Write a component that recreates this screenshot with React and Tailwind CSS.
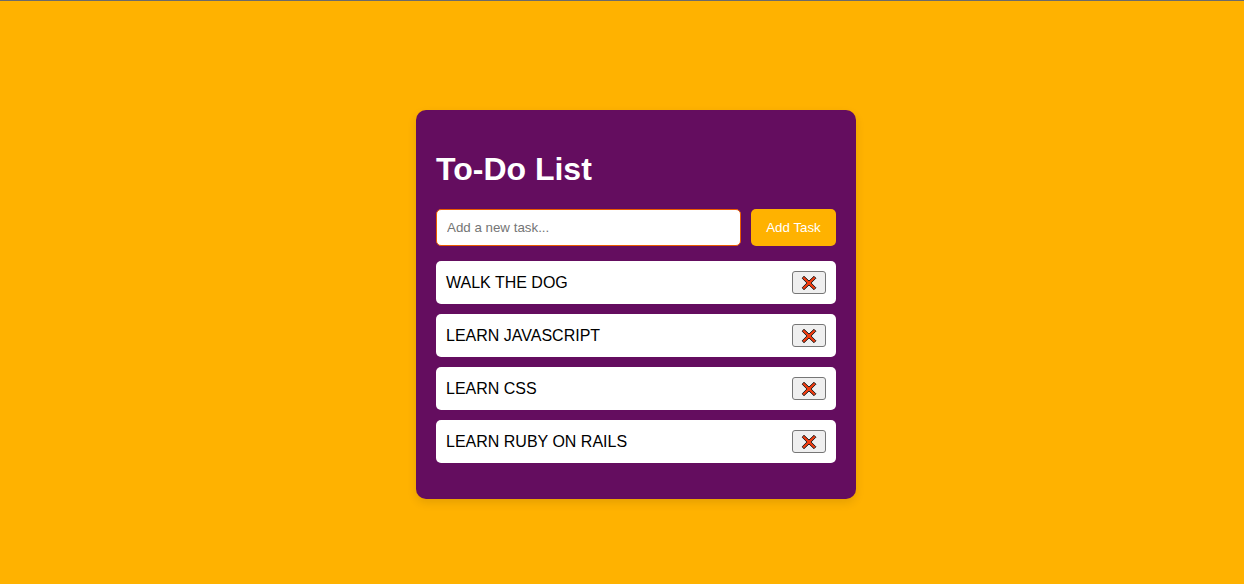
const tasks = ['WALK THE DOG', 'LEARN JAVASCRIPT', 'LEARN CSS', 'LEARN RUBY ON RAILS'];

const CrossIcon = () => (
  <svg width="16" height="16" viewBox="0 0 16 16" aria-hidden="true">
    <path
      d="M3 1.3 8 6 13 1.3 14.9 3.2 10.1 8 14.9 12.8 13 14.7 8 10 3 14.7 1.1 12.8 5.9 8 1.1 3.2Z"
      fill="#f03c10"
      stroke="#222222"
      strokeWidth="1"
      strokeLinejoin="round"
    />
  </svg>
);

const TaskRow = ({ label }) => (
  <li className="flex h-[43px] items-center justify-between rounded-[5px] bg-white px-[10px] text-[16px] text-black">
    <span>{label}</span>
    <button className="flex h-[23px] w-[34px] items-center justify-center rounded-[3px] border border-[#767676] bg-[#efefef]">
      <CrossIcon />
    </button>
  </li>
);

export default function App() {
  return (
    <div className="min-h-[584px] border-t border-[#6b6b6b] bg-[#ffb200] font-['Liberation_Sans',Arial,sans-serif]">
      <div className="flex justify-center pl-[28px] pt-[109px]">
        <div className="h-[389px] w-[440px] rounded-[10px] bg-[#640d5f] p-5 shadow-[0_4px_10px_rgba(0,0,0,0.1)]">
          <h1 className="mb-[21px] mt-[21px] text-[32px] font-bold leading-[37px] text-white">To-Do List</h1>
          <div className="flex gap-[10px]">
            <input
              type="text"
              placeholder="Add a new task..."
              className="h-[37px] w-[305px] rounded-[5px] border border-[#eb5b00] bg-white px-[10px] pb-px text-[13.33px] text-black outline-none placeholder:text-[#757575]"
            />
            <button className="h-[37px] w-[85px] rounded-[5px] bg-[#ffb200] text-[13.33px] text-white">Add Task</button>
          </div>
          <ul className="mt-[15px] flex flex-col gap-[10px]">
            {tasks.map((task) => (
              <TaskRow key={task} label={task} />
            ))}
          </ul>
        </div>
      </div>
    </div>
  );
}
